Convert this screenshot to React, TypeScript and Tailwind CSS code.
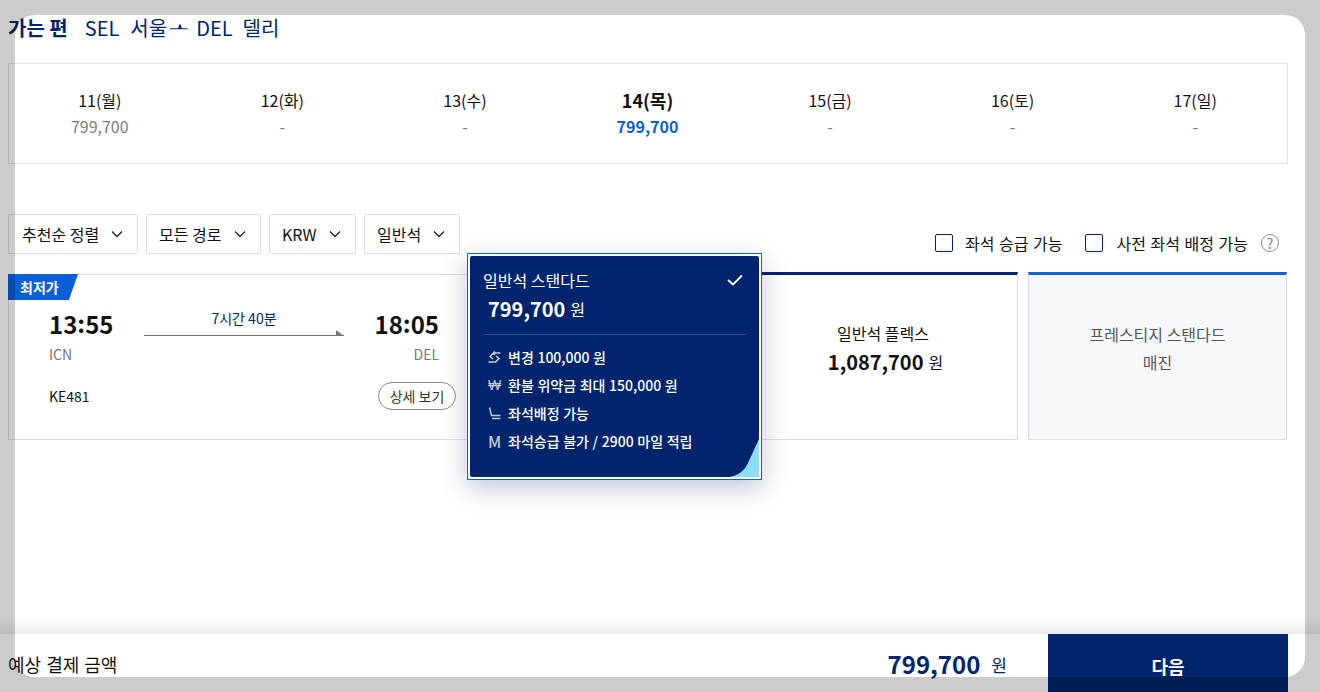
import React from "react";

const Chevron = () => (
  <svg width="14" height="14" viewBox="0 0 14 14" fill="none" stroke="#222" strokeWidth="1.3" className="shrink-0">
    <path d="M2 4.5 7 9.5 12 4.5" />
  </svg>
);

const dates = [
  ["11(월)", "799,700"],
  ["12(화)", "-"],
  ["13(수)", "-"],
  ["14(목)", "799,700"],
  ["15(금)", "-"],
  ["16(토)", "-"],
  ["17(일)", "-"],
];

const filters: [string, string][] = [
  ["추천순 정렬", "w-[130px] pl-[13px]"],
  ["모든 경로", "w-[115px] pl-[12px]"],
  ["KRW", "w-[87px] pl-[12px]"],
  ["일반석", "w-[96px] pl-[12px]"],
];

const Seat = () => (
  <svg width="13" height="13" viewBox="0 0 13 13" fill="none" stroke="#c3c9dc" strokeWidth="1.5">
    <path d="M1.5 0.5 3.5 8.5H12.5M4 11.5H12.5" />
  </svg>
);
const Change = () => (
  <svg width="13" height="13" viewBox="0 0 13 13" fill="none" stroke="#c3c9dc" strokeWidth="1.6">
    <path d="M12.5 2H5.5L2 5.5 5 8M0.5 11H7.5L11 7.5 8 5M5.5 2 7 .5M5.5 2 7 3.5" />
  </svg>
);

export default function App() {
  return (
    <div className="relative h-[692px] w-[1320px] overflow-hidden bg-white pl-[8px] pt-[15px] font-['Noto_Sans_CJK_KR','Noto_Sans',sans-serif] text-[#111]">
      <div className="w-[1280px]">
        <div className="flex h-[26px] items-center text-[20px] leading-[26px] text-[#00256c]">
          <span className="font-bold">가는 편</span>
          <span className="ml-[17px]">SEL</span>
          <span className="ml-[11px]">서울</span>
          <svg width="18" height="10" viewBox="0 0 18 10" className="ml-[3px]" fill="#00256c">
            <path d="M0 5.2h8L9.5 1.5 11 1.8l.6 3.4H17.5v1H0z" />
          </svg>
          <span className="ml-[8px]">DEL</span>
          <span className="ml-[10px]">델리</span>
        </div>

        <div className="mt-[22px] grid h-[101px] grid-cols-7 border border-[#e1e3ea] pt-[24px] text-center text-[16px] leading-[24px]">
          {dates.map(([d, p], i) => (
            <div key={d} className="-ml-px">
              <div className={i === 3 ? "text-[18px] font-bold" : ""}>{d}</div>
              <div className={i === 3 ? "text-[16px] font-bold leading-[28px] text-[#0b5fd6]" : "leading-[28px] text-[#7c7c7c]"}>{p}</div>
            </div>
          ))}
        </div>

        <div className="mt-[50px] flex h-[60px] items-start justify-between">
          <div className="flex gap-[8px]">
            {filters.map(([t, w]) => (
              <div key={t} className={`flex h-[40px] ${w} items-center justify-between rounded-[2px] border border-[#dcdfe8] pr-[13px] text-[16px]`}>
                <span>{t}</span>
                <Chevron />
              </div>
            ))}
          </div>
          <div className="flex items-center pr-[9px] pt-[19px] text-[16px] leading-[20px] [word-spacing:1px]">
            <div className="h-[18px] w-[18px] rounded-[2px] border border-[#00256c]" />
            <span className="ml-[12px]">좌석 승급 가능</span>
            <div className="ml-[23px] h-[18px] w-[18px] rounded-[2px] border border-[#00256c]" />
            <span className="ml-[13px]">사전 좌석 배정 가능</span>
            <div className="ml-[13px] flex h-[18px] w-[18px] items-center justify-center rounded-full border-[1.5px] border-[#8a8a8a] text-[14px] leading-none text-[#777]">?</div>
          </div>
        </div>

        <div className="flex h-[166px] items-stretch">
          <div className="relative w-[474px] border border-[#dcdfe8] pl-[40px] pr-[26px]">
            <div className="absolute -left-px -top-px flex h-[26px] w-[70px] items-center bg-[#0b5fd6] pl-[12px] text-[14px] font-bold text-white [clip-path:polygon(0_0,100%_0,87%_100%,0_100%)]">최저가</div>
            <div className="mt-[31px] flex w-[390px] items-start justify-between">
              <div className="text-[24px] font-bold leading-[36px]">13<span className="relative -top-px">:</span>55</div>
              <div className="mt-[2px] w-[200px] text-center text-[14px] leading-[20px] text-[#00256c]">
                7시간 40분
                <div className="relative mt-[7px] h-px bg-[#777]">
                  <svg width="8" height="6" viewBox="0 0 8 6" className="absolute -top-[5px] right-0" fill="#777"><path d="M0 0 8 6H0z" /></svg>
                </div>
              </div>
              <div className="text-[24px] font-bold leading-[36px]">18<span className="relative -top-px">:</span>05</div>
            </div>
            <div className="mt-[2px] flex w-[390px] justify-between text-[14px] leading-[20px] text-[#777]">
              <span>ICN</span><span>DEL</span>
            </div>
            <div className="mt-[18px] flex w-[407px] items-center justify-between">
              <span className="text-[14px]">KE481</span>
              <span className="flex h-[28px] w-[78px] items-center justify-center rounded-full border border-[#8a8a8a] text-[14px] text-[#333]">상세 보기</span>
            </div>
          </div>
          <div className="w-[268px] border-b border-t border-[#dcdfe8]" />
          <div className="-mt-[2px] flex w-[268px] flex-col items-center justify-center border-x border-b border-t-[3px] border-x-[#dcdfe8] border-b-[#dcdfe8] border-t-[#00256c] pb-[15px] text-center">
            <div className="pr-[2px] text-[16px] leading-[24px]">일반석 플렉스</div>
            <div className="mt-[1px] flex items-center gap-[5px] pl-[3px] leading-[32px]">
              <span className="text-[20px] font-bold">1,087,700</span>
              <span className="text-[16px]">원</span>
            </div>
          </div>
          <div className="-mt-[2px] ml-[10px] flex w-[259px] flex-col items-center justify-center border-x border-b border-t-[3px] border-x-[#dcdfe8] border-b-[#dcdfe8] border-t-[#1a63cc] bg-[#f7f8fc] pb-[18px] text-center text-[16px] leading-[28px] text-[#555]">
            <div>프레스티지 스탠다드</div>
            <div>매진</div>
          </div>
        </div>
      </div>

      {/* selected fare popover */}
      <div className="absolute left-[467px] top-[253px] h-[227px] w-[295px] border border-[#0064de] bg-white p-[2px] shadow-[0_8px_24px_rgba(0,37,108,0.25)]">
        <div className="relative h-full w-full overflow-hidden rounded-[2px] bg-[#00256c] px-[13px] pt-[12px] text-white">
          <div className="flex items-center justify-between pr-[3px] text-[16px] leading-[24px]">
            <span>일반석 스탠다드</span>
            <svg width="16" height="12" viewBox="0 0 16 12" fill="none" stroke="#fff" strokeWidth="1.8"><path d="M1 6l5 4.5L15 1.5" /></svg>
          </div>
          <div className="flex items-center gap-[5px] pl-[5px] leading-[34px]">
            <span className="text-[20px] font-bold">799,700</span>
            <span className="text-[16px]">원</span>
          </div>
          <div className="mt-[8px] h-px bg-[#2f4c86]" />
          <div className="mt-[8px] flex flex-col pl-[5px] text-[14px] font-medium leading-[28px] [word-spacing:0.5px]">
            <div className="flex items-center gap-[7px]"><Change />변경 100,000 원</div>
            <div className="flex items-center gap-[7px]"><span className="w-[13px] text-center font-['Liberation_Sans',sans-serif] text-[14px] font-normal text-[#c3c9dc]">₩</span>환불 위약금 최대 150,000 원</div>
            <div className="flex items-center gap-[7px]"><Seat />좌석배정 가능</div>
            <div className="flex items-center gap-[7px]"><span className="w-[13px] text-center text-[16px] font-medium text-[#c3c9dc]">M</span>좌석승급 불가 / 2900 마일 적립</div>
          </div>
          <svg width="30" height="38" viewBox="0 0 30 38" className="absolute bottom-0 right-0" fill="#8fdcf8">
            <path d="M30 0V38H0C8 37 14 33 18 26z" />
          </svg>
        </div>
      </div>

      {/* sticky footer */}
      <div className="absolute bottom-0 left-0 h-[58px] w-full">
        <div className="absolute -top-[16px] left-0 h-[16px] w-full bg-gradient-to-b from-transparent to-[#00143c17]" />
        <div className="ml-[8px] flex h-full w-[1280px] items-center justify-between">
          <span className="pt-[3px] text-[18px] [word-spacing:1px]">예상 결제 금액</span>
          <div className="flex h-full items-center">
            <span className="pt-[2px] text-[24px] font-bold text-[#00256c]">799,700</span>
            <span className="ml-[11px] pt-[3px] text-[17px] text-[#00256c]">원</span>
            <div className="ml-[41px] flex h-full w-[240px] items-center justify-center bg-[#00256c] pt-[6px] text-[18px] font-bold text-white">
              다음
            </div>
          </div>
        </div>
      </div>

      {/* dimmed page around the dialog window */}
      <div className="pointer-events-none absolute left-[15px] top-[15px] h-[662px] w-[1290px] rounded-[20px] shadow-[0_0_0_2000px_rgba(0,0,0,0.2)]" />
    </div>
  );
}
